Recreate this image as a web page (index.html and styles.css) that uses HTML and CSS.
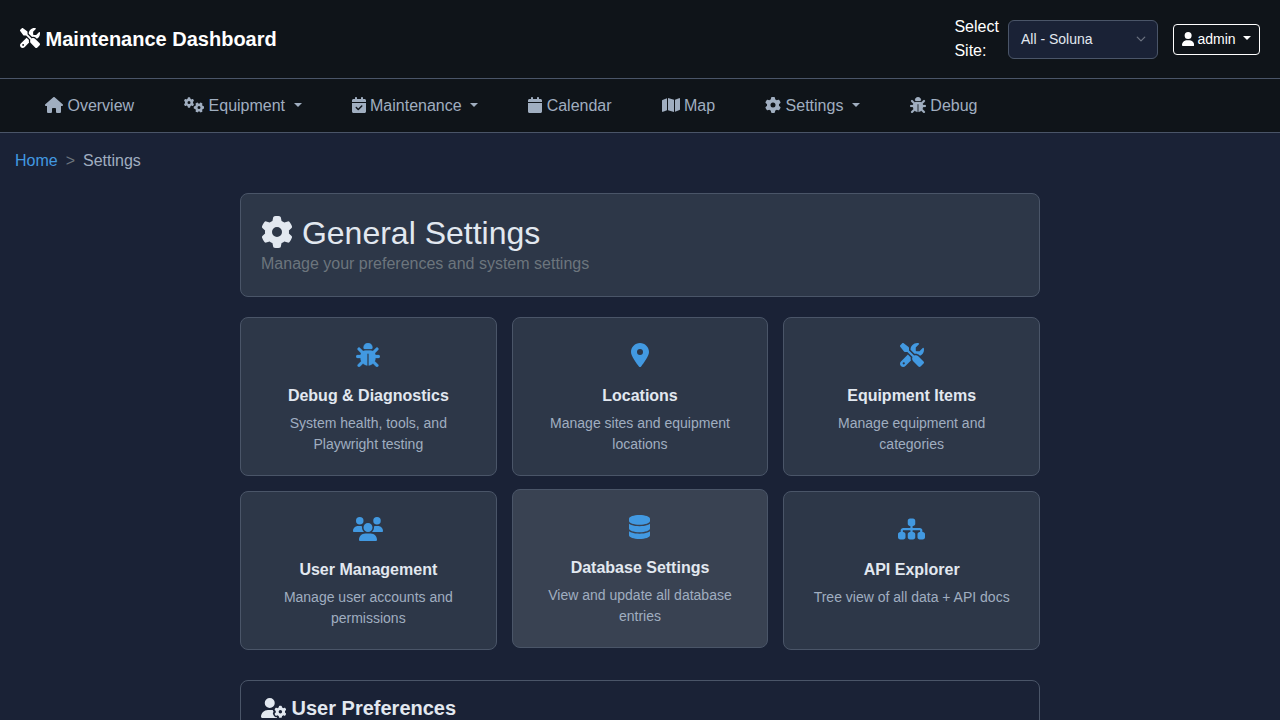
FILE: index.html
```html
<!DOCTYPE html>
<html lang="en">
<head>
<meta charset="utf-8">
<title>General Settings - Maintenance Dashboard</title>
<link rel="stylesheet" href="styles.css">
</head>
<body>
<svg class="sprite" aria-hidden="true">
  <symbol id="gear" viewBox="0 0 512 512"><path d="M495.9 166.6c3.2 8.7 .5 18.4-6.4 24.6l-43.3 39.4c1.1 8.3 1.7 16.8 1.7 25.4s-.6 17.1-1.7 25.4l43.3 39.4c6.9 6.2 9.6 15.9 6.4 24.6c-4.4 11.9-9.7 23.3-15.8 34.3l-4.7 8.1c-6.6 11-14 21.4-22.1 31.2c-5.9 7.2-15.7 9.6-24.5 6.8l-55.7-17.7c-13.4 10.3-28.2 18.9-44 25.4l-12.5 57.1c-2 9.1-9 16.3-18.2 17.8c-13.8 2.3-28 3.5-42.5 3.5s-28.7-1.2-42.5-3.5c-9.2-1.5-16.2-8.7-18.2-17.8l-12.5-57.1c-15.8-6.5-30.6-15.1-44-25.4L83.1 425.9c-8.8 2.8-18.6 .3-24.5-6.8c-8.1-9.8-15.5-20.2-22.1-31.2l-4.7-8.1c-6.1-11-11.4-22.4-15.8-34.3c-3.2-8.7-.5-18.4 6.4-24.6l43.3-39.4C64.6 273.1 64 264.6 64 256s.6-17.1 1.7-25.4L22.4 191.2c-6.9-6.2-9.6-15.9-6.4-24.6c4.4-11.9 9.7-23.3 15.8-34.3l4.7-8.1c6.6-11 14-21.4 22.1-31.2c5.9-7.2 15.7-9.6 24.5-6.8l55.7 17.7c13.4-10.3 28.2-18.9 44-25.4l12.5-57.1c2-9.1 9-16.3 18.2-17.8C227.3 1.2 241.5 0 256 0s28.7 1.2 42.5 3.5c9.2 1.5 16.2 8.7 18.2 17.8l12.5 57.1c15.8 6.5 30.6 15.1 44 25.4l55.7-17.7c8.8-2.8 18.6-.3 24.5 6.8c8.1 9.8 15.5 20.2 22.1 31.2l4.7 8.1c6.1 11 11.4 22.4 15.8 34.3zM256 336a80 80 0 1 0 0-160 80 80 0 1 0 0 160z"/></symbol>
  <symbol id="user" viewBox="0 0 448 512"><path d="M224 256A128 128 0 1 0 224 0a128 128 0 1 0 0 256zm-45.7 48C79.8 304 0 383.8 0 482.3C0 498.7 13.3 512 29.7 512H418.3c16.4 0 29.7-13.3 29.7-29.7C448 383.8 368.2 304 269.7 304H178.3z"/></symbol>
  <symbol id="house" viewBox="0 0 576 512"><path d="M575.8 255.5c0 18-15 32.1-32 32.1h-32l.7 160.2c0 2.7-.2 5.4-.5 8.1V472c0 22.1-17.9 40-40 40H456c-1.1 0-2.2 0-3.3-.1c-1.4 .1-2.8 .1-4.2 .1H416 392c-22.1 0-40-17.9-40-40V448 384c0-17.7-14.3-32-32-32H256c-17.7 0-32 14.3-32 32v64 24c0 22.1-17.9 40-40 40H160 128.1c-1.5 0-3-.1-4.5-.2c-1.2 .1-2.4 .2-3.6 .2H104c-22.1 0-40-17.9-40-40V360c0-.9 0-1.9 .1-2.8V287.6H32c-18 0-32-14-32-32.1c0-9 3-17 10-24L266.4 8c7-7 15-8 22-8s15 2 21 7L564.8 231.5c8 7 12 15 11 24z"/></symbol>
  <symbol id="map" viewBox="0 0 576 512"><path d="M384 476.1L192 421.2V35.9L384 90.8V476.1zm32-1.2V88.4L543.1 37.5c15.8-6.3 32.9 5.3 32.9 22.3V394.6c0 9.8-6 18.6-15.1 22.3L416 474.8zM15.1 95.1L160 37.2V423.6L32.9 474.5C17.1 480.8 0 469.2 0 452.2V117.4c0-9.8 6-18.6 15.1-22.3z"/></symbol>
  <symbol id="pin" viewBox="0 0 384 512"><path d="M215.7 499.2C267 435 384 279.4 384 192C384 86 298 0 192 0S0 86 0 192c0 87.4 117 243 168.3 307.2c12.3 15.3 35.1 15.3 47.4 0zM192 128a64 64 0 1 1 0 128 64 64 0 1 1 0-128z"/></symbol>
  <symbol id="calendar" viewBox="0 0 448 512"><path d="M96 32V64H48C21.5 64 0 85.5 0 112v48H448V112c0-26.5-21.5-48-48-48H352V32c0-17.7-14.3-32-32-32s-32 14.3-32 32V64H160V32c0-17.7-14.3-32-32-32S96 14.3 96 32zM448 192H0V464c0 26.5 21.5 48 48 48H400c26.5 0 48-21.5 48-48V192z"/></symbol>
  <symbol id="calendar-check" viewBox="0 0 448 512"><path d="M128 0c17.7 0 32 14.3 32 32V64H288V32c0-17.7 14.3-32 32-32s32 14.3 32 32V64h48c26.5 0 48 21.5 48 48v48H0V112C0 85.5 21.5 64 48 64H96V32c0-17.7 14.3-32 32-32zM0 192H448V464c0 26.5-21.5 48-48 48H48c-26.5 0-48-21.5-48-48V192zM329 305c9.4-9.4 9.4-24.6 0-33.9s-24.6-9.4-33.9 0l-95 95-47-47c-9.4-9.4-24.6-9.4-33.9 0s-9.4 24.6 0 33.9l64 64c9.4 9.4 24.6 9.4 33.9 0L329 305z"/></symbol>
  <symbol id="bug" viewBox="0 0 512 512"><path class="bug-shape" d="M256 0c53 0 96 43 96 96v3.6c0 15.7-12.7 28.4-28.4 28.4H188.4c-15.7 0-28.4-12.7-28.4-28.4V96c0-53 43-96 96-96zM41.4 105.4c12.5-12.5 32.8-12.5 45.3 0l64 64c.7 .7 1.3 1.4 1.9 2.1c14.2-7.3 30.4-11.4 47.5-11.4H312c17.1 0 33.2 4.1 47.5 11.4c.6-.7 1.2-1.4 1.9-2.1l64-64c12.5-12.5 32.8-12.5 45.3 0s12.5 32.8 0 45.3l-64 64c-.7 .7-1.4 1.3-2.1 1.9c6.2 12 10.1 25.3 11.1 39.5H480c17.7 0 32 14.3 32 32s-14.3 32-32 32H416c0 24.6-5.5 47.8-15.4 68.6c2.2 1.3 4.2 2.9 6 4.8l64 64c12.5 12.5 12.5 32.8 0 45.3s-32.8 12.5-45.3 0l-63.1-63.1c-24.5 21.8-55.8 36.2-90.3 39.6V240c0-8.8-7.2-16-16-16s-16 7.2-16 16V479.2c-34.5-3.4-65.8-17.8-90.3-39.6L86.6 502.6c-12.5 12.5-32.8 12.5-45.3 0s-12.5-32.8 0-45.3l64-64c1.9-1.9 3.9-3.4 6-4.8C101.5 367.8 96 344.6 96 320H32c-17.7 0-32-14.3-32-32s14.3-32 32-32H96.3c1.1-14.1 5-27.5 11.1-39.5c-.7-.6-1.4-1.2-2.1-1.9l-64-64c-12.5-12.5-12.5-32.8 0-45.3z"/></symbol>
  <symbol id="database" viewBox="0 0 448 512"><path d="M448 80v48c0 44.2-100.3 80-224 80S0 172.2 0 128V80C0 35.8 100.3 0 224 0S448 35.8 448 80zM393.2 214.7c20.8-7.4 39.9-16.9 54.8-28.6V288c0 44.2-100.3 80-224 80S0 332.2 0 288V186.1c14.9 11.8 34 21.2 54.8 28.6C99.7 230.7 159.5 240 224 240s124.3-9.3 169.2-25.3zM0 346.1c14.9 11.8 34 21.2 54.8 28.6C99.7 390.7 159.5 400 224 400s124.3-9.3 169.2-25.3c20.8-7.4 39.9-16.9 54.8-28.6V432c0 44.2-100.3 80-224 80S0 476.2 0 432V346.1z"/></symbol>
  <symbol id="users" viewBox="0 0 640 512"><path d="M144 0a80 80 0 1 1 0 160A80 80 0 1 1 144 0zM512 0a80 80 0 1 1 0 160A80 80 0 1 1 512 0zM0 298.7C0 239.8 47.8 192 106.7 192h42.7c15.9 0 31 3.5 44.6 9.7c-1.3 7.2-1.9 14.7-1.9 22.3c0 38.2 16.8 72.5 43.3 96c-.2 0-.4 0-.7 0H21.3C9.6 320 0 310.4 0 298.7zM405.3 320c-.2 0-.4 0-.7 0c26.6-23.5 43.3-57.8 43.3-96c0-7.6-.7-15-1.9-22.3c13.6-6.3 28.7-9.7 44.6-9.7h42.7C592.2 192 640 239.8 640 298.7c0 11.8-9.6 21.3-21.3 21.3H405.3zM224 224a96 96 0 1 1 192 0 96 96 0 1 1 -192 0zM128 485.3C128 411.7 187.7 352 261.3 352H378.7C452.3 352 512 411.7 512 485.3c0 14.7-11.9 26.7-26.7 26.7H154.7c-14.7 0-26.7-11.9-26.7-26.7z"/></symbol>
  <symbol id="sitemap" viewBox="0 0 576 512"><path d="M208 80c0-26.5 21.5-48 48-48h64c26.5 0 48 21.5 48 48v64c0 26.5-21.5 48-48 48h-8v40H464c30.9 0 56 25.1 56 56v32h8c26.5 0 48 21.5 48 48v64c0 26.5-21.5 48-48 48H464c-26.5 0-48-21.5-48-48V368c0-26.5 21.5-48 48-48h8V288c0-4.4-3.6-8-8-8H312v40h8c26.5 0 48 21.5 48 48v64c0 26.5-21.5 48-48 48H256c-26.5 0-48-21.5-48-48V368c0-26.5 21.5-48 48-48h8V280H112c-4.4 0-8 3.6-8 8v32h8c26.5 0 48 21.5 48 48v64c0 26.5-21.5 48-48 48H48c-26.5 0-48-21.5-48-48V368c0-26.5 21.5-48 48-48h8V288c0-30.9 25.1-56 56-56H264V192h-8c-26.5 0-48-21.5-48-48V80z"/></symbol>
  <symbol id="tools" viewBox="0 0 512 512"><path d="M78.6 5C69.1-2.4 55.6-1.5 47 7L7 47c-8.5 8.5-9.4 22-2.1 31.6l80 104c4.5 5.9 11.6 9.4 19 9.4h54.1l109 109c-14.7 29-10 65.4 14.3 89.6l112 112c12.5 12.5 32.8 12.5 45.3 0l64-64c12.5-12.5 12.5-32.8 0-45.3l-112-112c-24.2-24.2-60.6-29-89.6-14.3l-109-109V104c0-7.5-3.5-14.5-9.4-19L78.6 5zM19.9 396.1C7.2 408.8 0 426.1 0 444.1C0 481.6 30.4 512 67.9 512c18 0 35.3-7.2 48-19.9L233.7 374.3c-7.8-20.9-9-43.6-3.6-65.1l-61.7-61.7L19.9 396.1zM512 144c0-10.5-1.1-20.7-3.2-30.5c-2.4-11.2-16.1-14.1-24.2-6l-63.9 63.9c-3 3-7.1 4.7-11.3 4.7H352c-8.8 0-16-7.2-16-16V102.6c0-4.2 1.7-8.3 4.7-11.3l63.9-63.9c8.1-8.1 5.2-21.8-6-24.2C388.7 1.1 378.5 0 368 0C288.5 0 224 64.5 224 144l0 .8 85.3 85.3c36-9.1 75.8 .5 104 28.7L429 274.5c49-23 83-72.8 83-130.5zM56 432a24 24 0 1 1 48 0 24 24 0 1 1 -48 0z"/></symbol>
  <symbol id="gears" viewBox="0 0 640 512">
    <path id="small-gear" d="M308.5 135.3c7.1-6.3 9.9-16.2 6.2-25c-2.3-5.3-4.8-10.5-7.6-15.5L304 89.4c-3-5-6.3-9.9-9.8-14.6c-5.7-7.6-15.7-10.1-24.7-7.1l-28.2 9.3c-10.7-8.8-23-16-36.2-20.9L199 27.1c-1.9-9.3-9.1-16.7-18.5-17.8C173.9 8.4 167.2 8 160.4 8h-.7c-6.8 0-13.5 .4-20.1 1.2c-9.4 1.1-16.6 8.6-18.5 17.8L115 56.1c-13.3 5-25.5 12.1-36.2 20.9L50.5 67.8c-9-3-19-.5-24.7 7.1c-3.5 4.7-6.8 9.6-9.9 14.6l-3 5.3c-2.8 5-5.3 10.2-7.6 15.6c-3.7 8.7-.9 18.6 6.2 25l22.2 19.8C32.6 161.9 32 168.9 32 176s.6 14.1 1.7 20.9L11.5 216.7c-7.1 6.3-9.9 16.2-6.2 25c2.3 5.3 4.8 10.5 7.6 15.6l3 5.2c3 5.1 6.3 9.9 9.9 14.6c5.7 7.6 15.7 10.1 24.7 7.1l28.2-9.3c10.7 8.8 23 16 36.2 20.9l6.1 29.1c1.9 9.3 9.1 16.7 18.5 17.8c6.7 .8 13.5 1.2 20.4 1.2s13.7-.4 20.4-1.2c9.4-1.1 16.6-8.6 18.5-17.8l6.1-29.1c13.3-5 25.5-12.1 36.2-20.9l28.2 9.3c9 3 19 .5 24.7-7.1c3.5-4.7 6.8-9.5 9.8-14.6l3.1-5.4c2.8-5 5.3-10.2 7.6-15.5c3.7-8.7 .9-18.6-6.2-25l-22.2-19.8c1.1-6.8 1.7-13.8 1.7-20.9s-.6-14.1-1.7-20.9l22.2-19.8zM112 176a48 48 0 1 1 96 0 48 48 0 1 1 -96 0z"/>
    <use href="#small-gear" transform="translate(480 336) rotate(90) translate(-160 -176)"/>
  </symbol>
  <symbol id="user-gear" viewBox="0 0 640 512">
    <path d="M224 0a128 128 0 1 1 0 256A128 128 0 1 1 224 0zM178.3 304h91.4c11.8 0 23.4 1.2 34.5 3.3c-2.1 18.5 7.4 35.6 21.8 44.8c-16.6 10.6-26.7 31.6-20 53.3c4 12.9 9.4 25.5 16.4 37.6s15.2 23.1 24.4 33c15.7 16.9 39.6 18.4 57.2 8.7v.9c0 9.2 2.7 18.5 7.9 26.3H29.7C13.3 512 0 498.7 0 482.3C0 383.8 79.8 304 178.3 304z"/>
    <use href="#small-gear" transform="translate(496 352) scale(.93) translate(-160 -176)"/>
  </symbol>
</svg>

<header class="topbar">
  <div class="brand"><svg class="icon"><use href="#tools"/></svg> Maintenance Dashboard</div>
  <div class="topbar-actions">
    <label class="site-label">Select Site:</label>
    <div class="site-select"><span>All - Soluna</span><svg class="chevron" viewBox="0 0 16 16"><path d="m2 5 6 6 6-6"/></svg></div>
    <button class="user-button caret"><svg class="icon w-448"><use href="#user"/></svg> admin </button>
  </div>
</header>

<nav class="mainnav">
  <a class="nav-link"><svg class="icon w-576"><use href="#house"/></svg> Overview</a>
  <a class="nav-link caret"><svg class="icon w-640"><use href="#gears"/></svg> Equipment </a>
  <a class="nav-link caret"><svg class="icon w-448"><use href="#calendar-check"/></svg> Maintenance </a>
  <a class="nav-link"><svg class="icon w-448"><use href="#calendar"/></svg> Calendar</a>
  <a class="nav-link"><svg class="icon w-576"><use href="#map"/></svg> Map</a>
  <a class="nav-link caret"><svg class="icon"><use href="#gear"/></svg> Settings </a>
  <a class="nav-link"><svg class="icon"><use href="#bug"/></svg> Debug</a>
</nav>

<div class="breadcrumb">
  <a class="crumb-link">Home</a><span class="crumb-sep">&gt;</span><span class="crumb-current">Settings</span>
</div>

<main class="settings">
  <section class="page-header">
    <h1 class="page-title"><svg class="icon"><use href="#gear"/></svg> General Settings</h1>
    <p class="page-subtitle">Manage your preferences and system settings</p>
  </section>

  <section class="card-grid">
    <a class="card">
      <div class="card-icon"><svg class="icon"><use href="#bug"/></svg></div>
      <div class="card-title">Debug &amp; Diagnostics</div>
      <div class="card-text">System health, tools, and Playwright testing</div>
    </a>
    <a class="card">
      <div class="card-icon"><svg class="icon w-384"><use href="#pin"/></svg></div>
      <div class="card-title">Locations</div>
      <div class="card-text">Manage sites and equipment locations</div>
    </a>
    <a class="card">
      <div class="card-icon"><svg class="icon"><use href="#tools"/></svg></div>
      <div class="card-title">Equipment Items</div>
      <div class="card-text">Manage equipment and categories</div>
    </a>
    <a class="card">
      <div class="card-icon"><svg class="icon w-640"><use href="#users"/></svg></div>
      <div class="card-title">User Management</div>
      <div class="card-text">Manage user accounts and permissions</div>
    </a>
    <a class="card card-active">
      <div class="card-icon"><svg class="icon w-448"><use href="#database"/></svg></div>
      <div class="card-title">Database Settings</div>
      <div class="card-text">View and update all database entries</div>
    </a>
    <a class="card">
      <div class="card-icon"><svg class="icon w-576"><use href="#sitemap"/></svg></div>
      <div class="card-title">API Explorer</div>
      <div class="card-text">Tree view of all data + API docs</div>
    </a>
  </section>

  <section class="preferences">
    <h2 class="section-title"><svg class="icon w-640"><use href="#user-gear"/></svg> User Preferences</h2>
  </section>
</main>
</body>
</html>
```

FILE: styles.css
```css
* {
  box-sizing: border-box;
}

body {
  margin: 0;
  height: 720px;
  overflow: hidden;
  background: #1a2236;
  color: #e2e8f0;
  font-family: "Liberation Sans", Arial, sans-serif;
  font-size: 16px;
  line-height: 1.5;
}

.sprite {
  display: none;
}

.icon {
  display: inline-block;
  width: 1em;
  height: 1em;
  vertical-align: -0.125em;
  fill: currentColor;
}

.bug-shape {
  stroke: currentColor;
  stroke-width: 6;
}

.w-384 { width: 0.75em; }
.w-448 { width: 0.875em; }
.w-576 { width: 1.125em; }
.w-640 { width: 1.25em; }

.caret::after {
  content: "";
  display: inline-block;
  margin-left: 0.255em;
  vertical-align: 0.255em;
  border-top: 0.3em solid;
  border-right: 0.3em solid transparent;
  border-left: 0.3em solid transparent;
}

.topbar {
  display: flex;
  align-items: center;
  justify-content: space-between;
  height: 79px;
  padding: 0 20px;
  background: #0f1419;
  border-bottom: 1px solid #4a5568;
}

.brand {
  color: #fff;
  font-size: 20px;
  font-weight: 700;
}

.brand .icon {
  vertical-align: -2px;
}

.topbar-actions {
  display: flex;
  align-items: center;
}

.site-label {
  width: 45.6px;
  margin-right: 8px;
  color: #fff;
}

.site-select {
  display: flex;
  align-items: center;
  justify-content: space-between;
  width: 150px;
  height: 39px;
  margin-right: 15px;
  padding: 0 11px 0 12px;
  background: #1a2236;
  border: 1px solid #4a5568;
  border-radius: 6px;
  font-size: 14px;
}

.chevron {
  width: 10px;
  height: 10px;
  fill: none;
  stroke: #6b7280;
  stroke-width: 2;
  stroke-linecap: round;
  stroke-linejoin: round;
}

.user-button {
  width: 87px;
  padding: 4px 0 4px 8px;
  background: transparent;
  border: 1px solid #fff;
  border-radius: 4px;
  color: #fff;
  font: inherit;
  font-size: 14px;
  text-align: left;
  white-space: pre;
}

.user-button .icon {
  margin-right: -0.7px;
  vertical-align: -2.5px;
}

.mainnav {
  display: flex;
  align-items: center;
  height: 54px;
  padding: 0 20px;
  background: #0f1419;
  border-bottom: 1px solid #4a5568;
}

.nav-link {
  padding: 0 25px;
  color: #a0aec0;
  white-space: pre;
}

.nav-link.caret::after {
  vertical-align: 3.5px;
}

.breadcrumb {
  display: flex;
  gap: 8px;
  padding: 16px 15px 20px;
}

.crumb-link {
  color: #4299e1;
}

.crumb-sep {
  color: #6c757d;
}

.crumb-current {
  color: #a0aec0;
}

.settings {
  width: 800px;
  margin: 0 auto;
}

.page-header {
  margin-bottom: 20px;
  padding: 20px;
  background: #2d3748;
  border: 1px solid #4a5568;
  border-radius: 8px;
}

.page-title {
  margin: 0;
  font-size: 32px;
  font-weight: 500;
  line-height: 1.2;
}

.page-subtitle {
  margin: 0;
  color: #6c757d;
}

.card-grid {
  display: grid;
  grid-template-columns: repeat(3, 1fr);
  gap: 15px;
  margin-bottom: 30px;
}

.card {
  padding: 20px;
  background: #2d3748;
  border: 1px solid #4a5568;
  border-radius: 8px;
  text-align: center;
}

.card-active {
  background: #394252;
  transform: translateY(-2px);
}

.card-icon {
  margin-bottom: 10px;
  color: #4299e1;
  font-size: 24px;
}

.card-title {
  margin-bottom: 5px;
  font-weight: 700;
}

.card-text {
  color: #a0aec0;
  font-size: 14px;
}

.preferences {
  padding: 15px 20px;
  border: 1px solid #4a5568;
  border-radius: 8px;
}

.section-title {
  margin: 0;
  font-size: 20px;
  font-weight: 700;
  line-height: 1.2;
}
```
